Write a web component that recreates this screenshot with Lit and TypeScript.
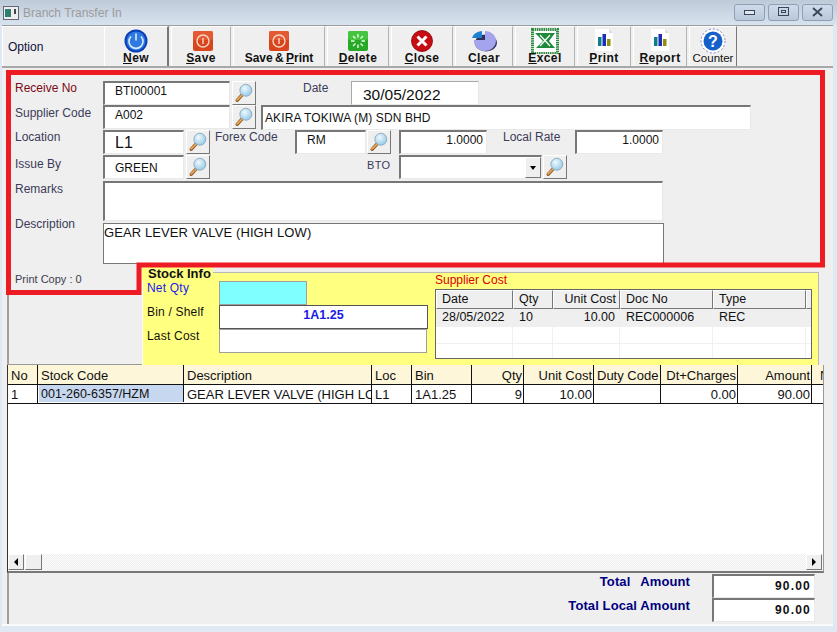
import { LitElement, html, css, svg } from "lit";
import { customElement } from "lit/decorators.js";

const lens = html`<svg class="lens" viewBox="0 0 24 24" width="22" height="22">
  <defs><radialGradient id="lg" cx="0.4" cy="0.35" r="0.75"><stop offset="0" stop-color="#eef9fe"/><stop offset="1" stop-color="#8cc4e2"/></radialGradient></defs>
  <path d="M4.500 20 L9.500 14.500" stroke="#8f5a24" stroke-width="3.600" stroke-linecap="round"/>
  <path d="M4.500 19.500 L9.500 14.500" stroke="#eaa85c" stroke-width="1.800" stroke-linecap="round"/>
  <circle cx="14" cy="9" r="6.500" fill="url(#lg)" stroke="#8aa9bf" stroke-width="1"/>
</svg>`;

const search = () => html`<button class="lookup">${lens}</button>`;

const icons: Record<string, unknown> = {
  power: svg`<circle cx="18" cy="13" r="11.500" fill="#0b3fb8"/><circle cx="18" cy="13" r="9.500" fill="#2f79e0"/><path d="M13 8.500a7 7 0 1 0 10 0" fill="none" stroke="#d8ecff" stroke-width="1.600"/><path d="M18 5.500v7" stroke="#d8ecff" stroke-width="1.600"/>`,
  save: svg`<rect x="8" y="3" width="20" height="20" rx="2" fill="#d8441c"/><rect x="8" y="3" width="20" height="9" rx="2" fill="#e8643c" opacity=".7"/><circle cx="18" cy="13" r="6" fill="none" stroke="#f8d8c8" stroke-width="1.400"/><path d="M18 10v6" stroke="#f8d8c8" stroke-width="1.400"/>`,
  del: svg`<rect x="8" y="3" width="20" height="20" rx="2" fill="#27a827"/><rect x="8" y="3" width="20" height="9" rx="2" fill="#52d04a" opacity=".7"/><g stroke="#e4fbe0" stroke-width="1.400"><path d="M18 6v3.500M18 16.500V20M11 13h3.500M21.500 13H25M13 8l2.500 2.500M20.500 15.500L23 18M23 8l-2.500 2.500M15.500 15.500L13 18"/></g>`,
  close: svg`<circle cx="18" cy="13" r="10.500" fill="#c80d12" stroke="#800" stroke-width=".8"/><path d="M13.500 8.500l9 9M22.500 8.500l-9 9" stroke="#fff" stroke-width="3"/>`,
  clear: svg`<ellipse cx="20" cy="15" rx="11" ry="8.500" fill="#30305a"/><path d="M19 3a11 10 0 1 1-11 9h11z" fill="#a4a4ee"/><path d="M6 10a11 8 0 0 1 10-7v7z" fill="#1f7fd0"/>`,
  excel: svg`<rect x="5.500" y="1.500" width="25" height="24" fill="#fff" stroke="#2d8a3e" stroke-width="3" stroke-dasharray="1.500 .7"/><path d="M8 5h20l-6 8 6 7H9l7-7z" fill="#1d8a3a"/><path d="M13 7l10 11M23 7L13 18" stroke="#fff" stroke-width="1.200"/>`,
  chart: svg`<path d="M9 1h14l4 4v18H9z" fill="#fff"/><path d="M23 1l4 4h-4z" fill="#dcdcdc"/><rect x="12" y="9" width="3.500" height="9" fill="#0f7f8f"/><rect x="16.500" y="6" width="3.500" height="12" fill="#1c2cb8"/><rect x="21" y="11" width="3.500" height="7" fill="#8f8f10"/>`,
  help: svg`<circle cx="18" cy="13" r="12" fill="#fff" stroke="#8080c8" stroke-width="1" stroke-dasharray="2 2"/><circle cx="18" cy="13" r="9.500" fill="#1560c8"/><text x="18" y="18.500" text-anchor="middle" font-family="Liberation Sans" font-weight="700" font-size="16" fill="#fff">?</text>`,
};

const tools = [
  { label: html`<u>N</u>ew`, icon: "power", cls: "t-new" },
  { label: html`<u>S</u>ave`, icon: "save", cls: "t-save" },
  { label: html`Save &amp; <u>P</u>rint`, icon: "save", cls: "t-sp" },
  { label: html`<u>D</u>elete`, icon: "del", cls: "t-del" },
  { label: html`<u>C</u>lose`, icon: "close", cls: "t-close" },
  { label: html`C<u>l</u>ear`, icon: "clear", cls: "t-clear" },
  { label: html`<u>E</u>xcel`, icon: "excel", cls: "t-excel" },
  { label: html`<u>P</u>rint`, icon: "chart", cls: "t-print" },
  { label: html`<u>R</u>eport`, icon: "chart", cls: "t-report" },
  { label: html`Counter`, icon: "help", cls: "t-counter" },
];

const cols = [
  { t: "No", w: 30, v: "1" },
  { t: "Stock Code", w: 146, v: "001-260-6357/HZM", sel: true },
  { t: "Description", w: 188, v: "GEAR LEVER VALVE (HIGH LOW)" },
  { t: "Loc", w: 40, v: "L1" },
  { t: "Bin", w: 60, v: "1A1.25" },
  { t: "Qty", w: 52, v: "9", r: true },
  { t: "Unit Cost", w: 70, v: "10.00", r: true },
  { t: "Duty Code", w: 67, v: "" },
  { t: "Dt+Charges", w: 77, v: "0.00", r: true },
  { t: "Amount", w: 74, v: "90.00", r: true },
  { t: "N", w: 40, v: "", x: true },
];

const supCols = [
  { t: "Date", w: 77, v: "28/05/2022" },
  { t: "Qty", w: 40, v: "10" },
  { t: "Unit Cost", w: 67, v: "10.00", r: true },
  { t: "Doc No", w: 93, v: "REC000006" },
  { t: "Type", w: 93, v: "REC" },
  { t: "", w: 6, v: "" },
];

@customElement("app-root")
export class AppRoot extends LitElement {
  static styles = css`
    :host { display: block; width: 837px; height: 632px; font-family: "Liberation Sans", Arial, sans-serif; font-size: 12px; color: #111; }
    * { box-sizing: border-box; }
    .window { position: relative; width: 837px; height: 632px; background: #dfe8f3; display: flex; flex-direction: column; overflow: hidden; }
    .title { height: 25px; flex: none; background: linear-gradient(#bfcad8, #d8e3f0); display: flex; align-items: center; padding: 0 4px 0 3px; color: #9b9b9b; font-size: 12px; }
    .title .appicon { flex: none; margin-right: 4px; }
    .title .spacer { flex: 1; }
    .winbtn { width: 31px; height: 17px; margin-left: 3px; margin-top: -1px; border: 1px solid #8fa0b4; border-radius: 3px; background: linear-gradient(#cfdbea, #b9c8da); display: flex; align-items: center; justify-content: center; }
    .main { margin: 0 4px 6px 2px; flex: 1; background: #efefef; border-top: 1px solid #9c9c9c; border-bottom: 2px solid #fafafa; display: flex; flex-direction: column; min-height: 0; }
    .toolbar { height: 42px; flex: none; display: flex; border-bottom: 2px solid #a8a8a8; }
    .option { width: 102px; flex: none; padding-left: 5px; display: flex; align-items: center; color: #10103a; background: #efefef; border-left: 1px solid #fff; border-top: 1px solid #fff; }
    .tool { flex: none; height: 40px; margin-right: 2px; border-top: 1px solid #fff; border-left: 1px solid #fff; border-right: 1px solid #b4b4b4; display: flex; flex-direction: column; align-items: center; padding-top: 1px; position: relative; }
    .tool svg { display: block; flex: none; }
    .tool span { position: absolute; bottom: 1px; left: 0; right: 0; text-align: center; font-weight: 700; font-size: 12px; letter-spacing: .4px; color: #111; white-space: nowrap; }
    .t-new { width: 65px; border-right: 2px solid #777; margin-right: 2px; }
    .t-save { width: 60px; }
    .t-save svg { margin-left: 3px; }
    .t-sp { width: 92px; }
    .t-sp span { word-spacing: -1px; letter-spacing: 0; }
    .t-del { width: 62px; }
    .t-close { width: 62px; }
    .t-clear { width: 58px; }
    .t-excel { width: 60px; }
    .t-print { width: 54px; }
    .t-report { width: 54px; }
    .t-counter { width: 48px; border-right: 1px solid #777; margin-right: 0; }
    .t-counter span { font-weight: 400; letter-spacing: 0; font-size: 11.500px; bottom: 2px; }

    .form { height: 197px; flex: none; padding: 13px 0 0 13px; display: flex; flex-direction: column; }
    .row { display: flex; align-items: flex-start; flex: none; }
    .r1 { height: 24px; }
    .r2, .r3 { height: 25px; }
    .r4 { height: 26px; }
    .r5, .r6 { height: 42px; }
    label { flex: none; color: #3c3c58; font-size: 12px; white-space: nowrap; }
    .lbl-main { width: 88px; }
    .r2 label, .r5 label { padding-top: 1px; }
    .r4 label.lbl-main { padding-top: 2px; }
    .r6 label { margin-top: -7px; padding-top: 1px; }
    .red { color: #7a0a14; }
    .field { flex: none; height: 24px; background: #fff; border: 1px solid; border-color: #777 #e9e9e9 #e9e9e9 #777; border-width: 2px 1px 1px 2px; display: flex; align-items: center; padding: 0 3px 0 10px; white-space: nowrap; overflow: hidden; color: #111; }
    .up { padding-bottom: 5px; }
    .lookup { flex: none; width: 24px; height: 24px; padding: 0; background: #efefef; border: 1px solid; border-color: #fff #777 #777 #fff; display: flex; align-items: center; justify-content: center; }
    .num { justify-content: flex-end; }
    .w127 { width: 127px; margin-right: 2px; }
    .w81 { width: 81px; margin-right: 2px; }
    .big { font-size: 16px; }
    .date { width: 128px; font-size: 15.500px; padding-left: 11px; padding-top: 4px; border-color: #aaa #e9e9e9 #e9e9e9 #aaa; border-width: 1px; }
    .lbl-date { width: 48px; margin-left: 47px; }
    .name { width: 490px; margin-left: 5px; padding-left: 2px; letter-spacing: .1px; height: 25px; }
    .lbl-forex { width: 80px; margin-left: 5px; }
    .rm { width: 71px; padding-left: 10px; margin-right: 1px; }
    .rate1 { width: 88px; margin-left: 8px; }
    .lbl-local { width: 72px; margin-left: 16px; }
    .rate2 { width: 88px; }
    .lbl-bto { width: 32px; margin-left: 157px; font-size: 11px; padding-top: 4px; letter-spacing: .3px; }
    .combo { width: 143px; padding: 0; justify-content: flex-end; margin-right: 1px; }
    .combo i { width: 16px; height: 21px; background: #efefef; border: 1px solid; border-color: #fff #777 #777 #fff; display: flex; align-items: center; justify-content: center; font-style: normal; }
    .combo i::before { content: ""; border: 3.500px solid transparent; border-top: 4px solid #000; border-bottom: 0; }
    .memo { width: 560px; height: 40px; align-items: flex-start; padding: 1px; }
    .memo2 { width: 561px; height: 41px; border-color: #777; border-width: 1px; padding: 1px 0 0 0; font-size: 13px; letter-spacing: .1px; }

    .mid { height: 100px; flex: none; display: flex; }
    .left { width: 135px; margin-left: 5px; flex: none; border-left: 2px solid #a0a0a0; border-bottom: 1px solid #999; padding: 8px 0 0 6px; color: #3c3c4c; font-size: 11px; }
    .stock { width: 677px; flex: none; background: #ffff80; position: relative; border-top: 1px solid #b8b8b8; border-left: 1px solid #fff; margin-top: 7px; height: 93px; display: flex; padding: 8px 0 0 4px; border-right: 1px solid #b8b8b8; }
    .legend { position: absolute; left: -1px; top: -6px; background: #ffff80; font-weight: 700; font-size: 13px; padding: 0 2px 0 6px; color: #111; line-height: 14px; }
    .stock-left { width: 288px; flex: none; display: flex; flex-direction: column; }
    .srow { display: flex; height: 24px; }
    .srow label { width: 72px; color: #111; padding-top: 0; letter-spacing: .2px; }
    .srow label.blue { color: #1a1af0; }
    .sfield { width: 208px; height: 24px; background: #fff; border: 1px solid #a0a0a0; }
    .cyan { width: 88px; background: #7fffff; }
    .binf { width: 209px; border: 1px solid #555; color: #1a1ae8; font-weight: 700; display: flex; align-items: center; justify-content: center; padding-bottom: 5px; font-size: 12.500px; }
    .sup { margin-top: -7px; }
    .sup-title { color: #d8000c; font-size: 12px; height: 15px; line-height: 13px; }
    .sup-table { width: 377px; height: 70px; background: #fff; border: 1px solid #666; display: flex; flex-direction: column; overflow: hidden; font-size: 12.500px; }
    .sh, .sr { display: flex; flex: none; }
    .sh { height: 19px; background: #efefef; }
    .sh div { flex: none; border: 1px solid; border-color: #fff #777 #777 #fff; padding: 0 3px 0 5px; line-height: 17px; overflow: hidden; white-space: nowrap; }
    .sr { height: 16.500px; }
    .sr div { flex: none; border-right: 1px solid #f0f0f0; border-bottom: 1px solid #f0f0f0; padding: 0 4px 0 6px; line-height: 16px; white-space: nowrap; }
    .sr.on { background: #efefef; height: 18px; }
    .sr.on div { border-color: #efefef; }
    .r { text-align: right; }

    .grid { height: 208px; flex: none; margin-left: 5px; width: 817px; background: #fff; border-left: 1px solid #333; border-right: 1px solid #999; border-bottom: 2px solid #777; display: flex; flex-direction: column; overflow: hidden; font-size: 13px; }
    .gh, .gr { display: flex; flex: none; width: 840px; }
    .gh { height: 20px; background: #fdf6d9; border-bottom: 1px solid #111; }
    .gr { height: 18.500px; border-bottom: 1px solid #111; }
    .gh div, .gr div { flex: none; border-right: 1px solid #111; padding: 0 1px 0 3px; white-space: nowrap; overflow: hidden; line-height: 21px; }
    .gr div { line-height: 19px; }
    .gr div.sel { background: #c6d7ef; margin: 0 0 1px 1px; padding-left: 2px; font-size: 12.500px; }
    .gh div.x { padding-left: 8px; border: 0; }
    .gr div.x { border: 0; }
    .gfill { flex: 1; }
    .scroll { height: 17px; flex: none; display: flex; background-color: #f8f8f8; background-image: repeating-conic-gradient(#efefef 0 25%, #fbfbfb 0 50%); background-size: 2px 2px; }
    .sb { width: 16px; height: 16px; background: #efefef; border: 1px solid; border-color: #fff #777 #777 #fff; margin-right: 1px; display: flex; align-items: center; justify-content: center; }
    .sb.l::before { content: ""; border: 4px solid transparent; border-right: 4px solid #000; border-left: 0; }
    .sb.g { width: 17px; margin-right: 0; }
    .sb.x::before { content: ""; border: 4px solid transparent; border-left: 4px solid #000; border-right: 0; }
    .sgap { flex: 1; }

    .foot { flex: 1; min-height: 0; margin-left: 5px; border-left: 2px solid #a0a0a0; display: grid; grid-template-columns: 1fr 103px; grid-auto-rows: 24px; column-gap: 22px; padding: 1px 18px 0 0; }
    .foot label { text-align: right; color: #000080; font-weight: 700; font-size: 13px; padding-top: 1px; line-height: 14px; letter-spacing: .1px; }
    .foot label.wide { word-spacing: 1.500px; }
    .foot .v { background: #fff; border: 1px solid; border-color: #777 #e9e9e9 #e9e9e9 #777; border-width: 2px 1px 1px 2px; height: 23.500px; text-align: right; font-weight: 700; line-height: 20px; padding-right: 3px; letter-spacing: 1.200px; font-size: 12px; }

    .mark { position: absolute; left: 0; top: 0; pointer-events: none; }
  `;

  render() {
    return html`<div class="window">
      <div class="title">
        <svg class="appicon" width="16" height="14" viewBox="0 0 16 14"><rect x=".5" y=".5" width="15" height="13" fill="#eee" stroke="#667"/><rect x="2" y="3" width="6" height="8" fill="#2f7f6f"/><rect x="11" y="3" width="2" height="5" fill="#444"/></svg>
        <span>Branch Transfer In</span>
        <span class="spacer"></span>
        <div class="winbtn"><svg width="12" height="8"><rect x=".5" y="2.500" width="10" height="4" fill="#dfe6ef" stroke="#39465a"/></svg></div>
        <div class="winbtn"><svg width="12" height="10"><rect x=".5" y=".5" width="10" height="8" fill="none" stroke="#39465a"/><rect x="3.500" y="3.500" width="4" height="2" fill="none" stroke="#39465a"/></svg></div>
        <div class="winbtn"><svg width="12" height="10"><path d="M1 1l9 8M10 1L1 9" stroke="#39465a" stroke-width="1.800"/></svg></div>
      </div>
      <div class="main">
        <div class="toolbar">
          <div class="option">Option</div>
          ${tools.map((t) => html`<div class="tool ${t.cls}"><svg width="36" height="26" viewBox="0 0 36 26">${icons[t.icon]}</svg><span>${t.label}</span></div>`)}
        </div>
        <div class="form">
          <div class="row r1">
            <label class="lbl-main red">Receive No</label>
            <div class="field w127 up">BTI00001</div>${search()}
            <label class="lbl-date">Date</label>
            <div class="field date">30/05/2022</div>
          </div>
          <div class="row r2">
            <label class="lbl-main">Supplier Code</label>
            <div class="field w127 up">A002</div>${search()}
            <div class="field name">AKIRA TOKIWA (M) SDN BHD</div>
          </div>
          <div class="row r3">
            <label class="lbl-main">Location</label>
            <div class="field w81 big">L1</div>${search()}
            <label class="lbl-forex">Forex Code</label>
            <div class="field rm up">RM</div>${search()}
            <div class="field rate1 num up">1.0000</div>
            <label class="lbl-local">Local Rate</label>
            <div class="field rate2 num up">1.0000</div>
          </div>
          <div class="row r4">
            <label class="lbl-main">Issue By</label>
            <div class="field w81">GREEN</div>${search()}
            <label class="lbl-bto">BTO</label>
            <div class="field combo"><i></i></div>${search()}
          </div>
          <div class="row r5">
            <label class="lbl-main">Remarks</label>
            <div class="field memo"></div>
          </div>
          <div class="row r6">
            <label class="lbl-main">Description</label>
            <div class="field memo memo2">GEAR LEVER VALVE (HIGH LOW)</div>
          </div>
        </div>
        <div class="mid">
          <div class="left">Print Copy : 0</div>
          <div class="stock">
            <span class="legend">Stock Info</span>
            <div class="stock-left">
              <div class="srow"><label class="blue">Net Qty</label><div class="sfield cyan"></div></div>
              <div class="srow"><label>Bin / Shelf</label><div class="sfield binf">1A1.25</div></div>
              <div class="srow"><label>Last Cost</label><div class="sfield"></div></div>
            </div>
            <div class="sup">
              <div class="sup-title">Supplier Cost</div>
              <div class="sup-table">
                <div class="sh">${supCols.map((c) => html`<div class="${c.r ? "r" : ""}" style="width:${c.w}px">${c.t}</div>`)}</div>
                <div class="sr on">${supCols.map((c) => html`<div class="${c.r ? "r" : ""}" style="width:${c.w}px">${c.v}</div>`)}</div>
                <div class="sr">${supCols.map((c) => html`<div style="width:${c.w}px"></div>`)}</div>
                <div class="sr">${supCols.map((c) => html`<div style="width:${c.w}px"></div>`)}</div>
              </div>
            </div>
          </div>
        </div>
        <div class="grid">
          <div class="gh">${cols.map((c) => html`<div class="${c.r ? "r" : ""} ${c.x ? "x" : ""}" style="width:${c.w}px">${c.t}</div>`)}</div>
          <div class="gr">${cols.map((c) => html`<div class="${c.r ? "r" : ""} ${c.sel ? "sel" : ""} ${c.x ? "x" : ""}" style="width:${c.sel ? c.w - 1 : c.w}px">${c.v}</div>`)}</div>
          <div class="gfill"></div>
          <div class="scroll"><div class="sb l"></div><div class="sb g"></div><div class="sgap"></div><div class="sb x"></div></div>
        </div>
        <div class="foot">
          <label class="wide">Total&nbsp; Amount</label><div class="v">90.00</div>
          <label>Total Local Amount</label><div class="v">90.00</div>
        </div>
      </div>
      <svg class="mark" width="837" height="632"><path d="M8.500 72.500H822.500V265H139V292.500H8.500Z" fill="none" stroke="#ed1c24" stroke-width="5"/></svg>
    </div>`;
  }
}
